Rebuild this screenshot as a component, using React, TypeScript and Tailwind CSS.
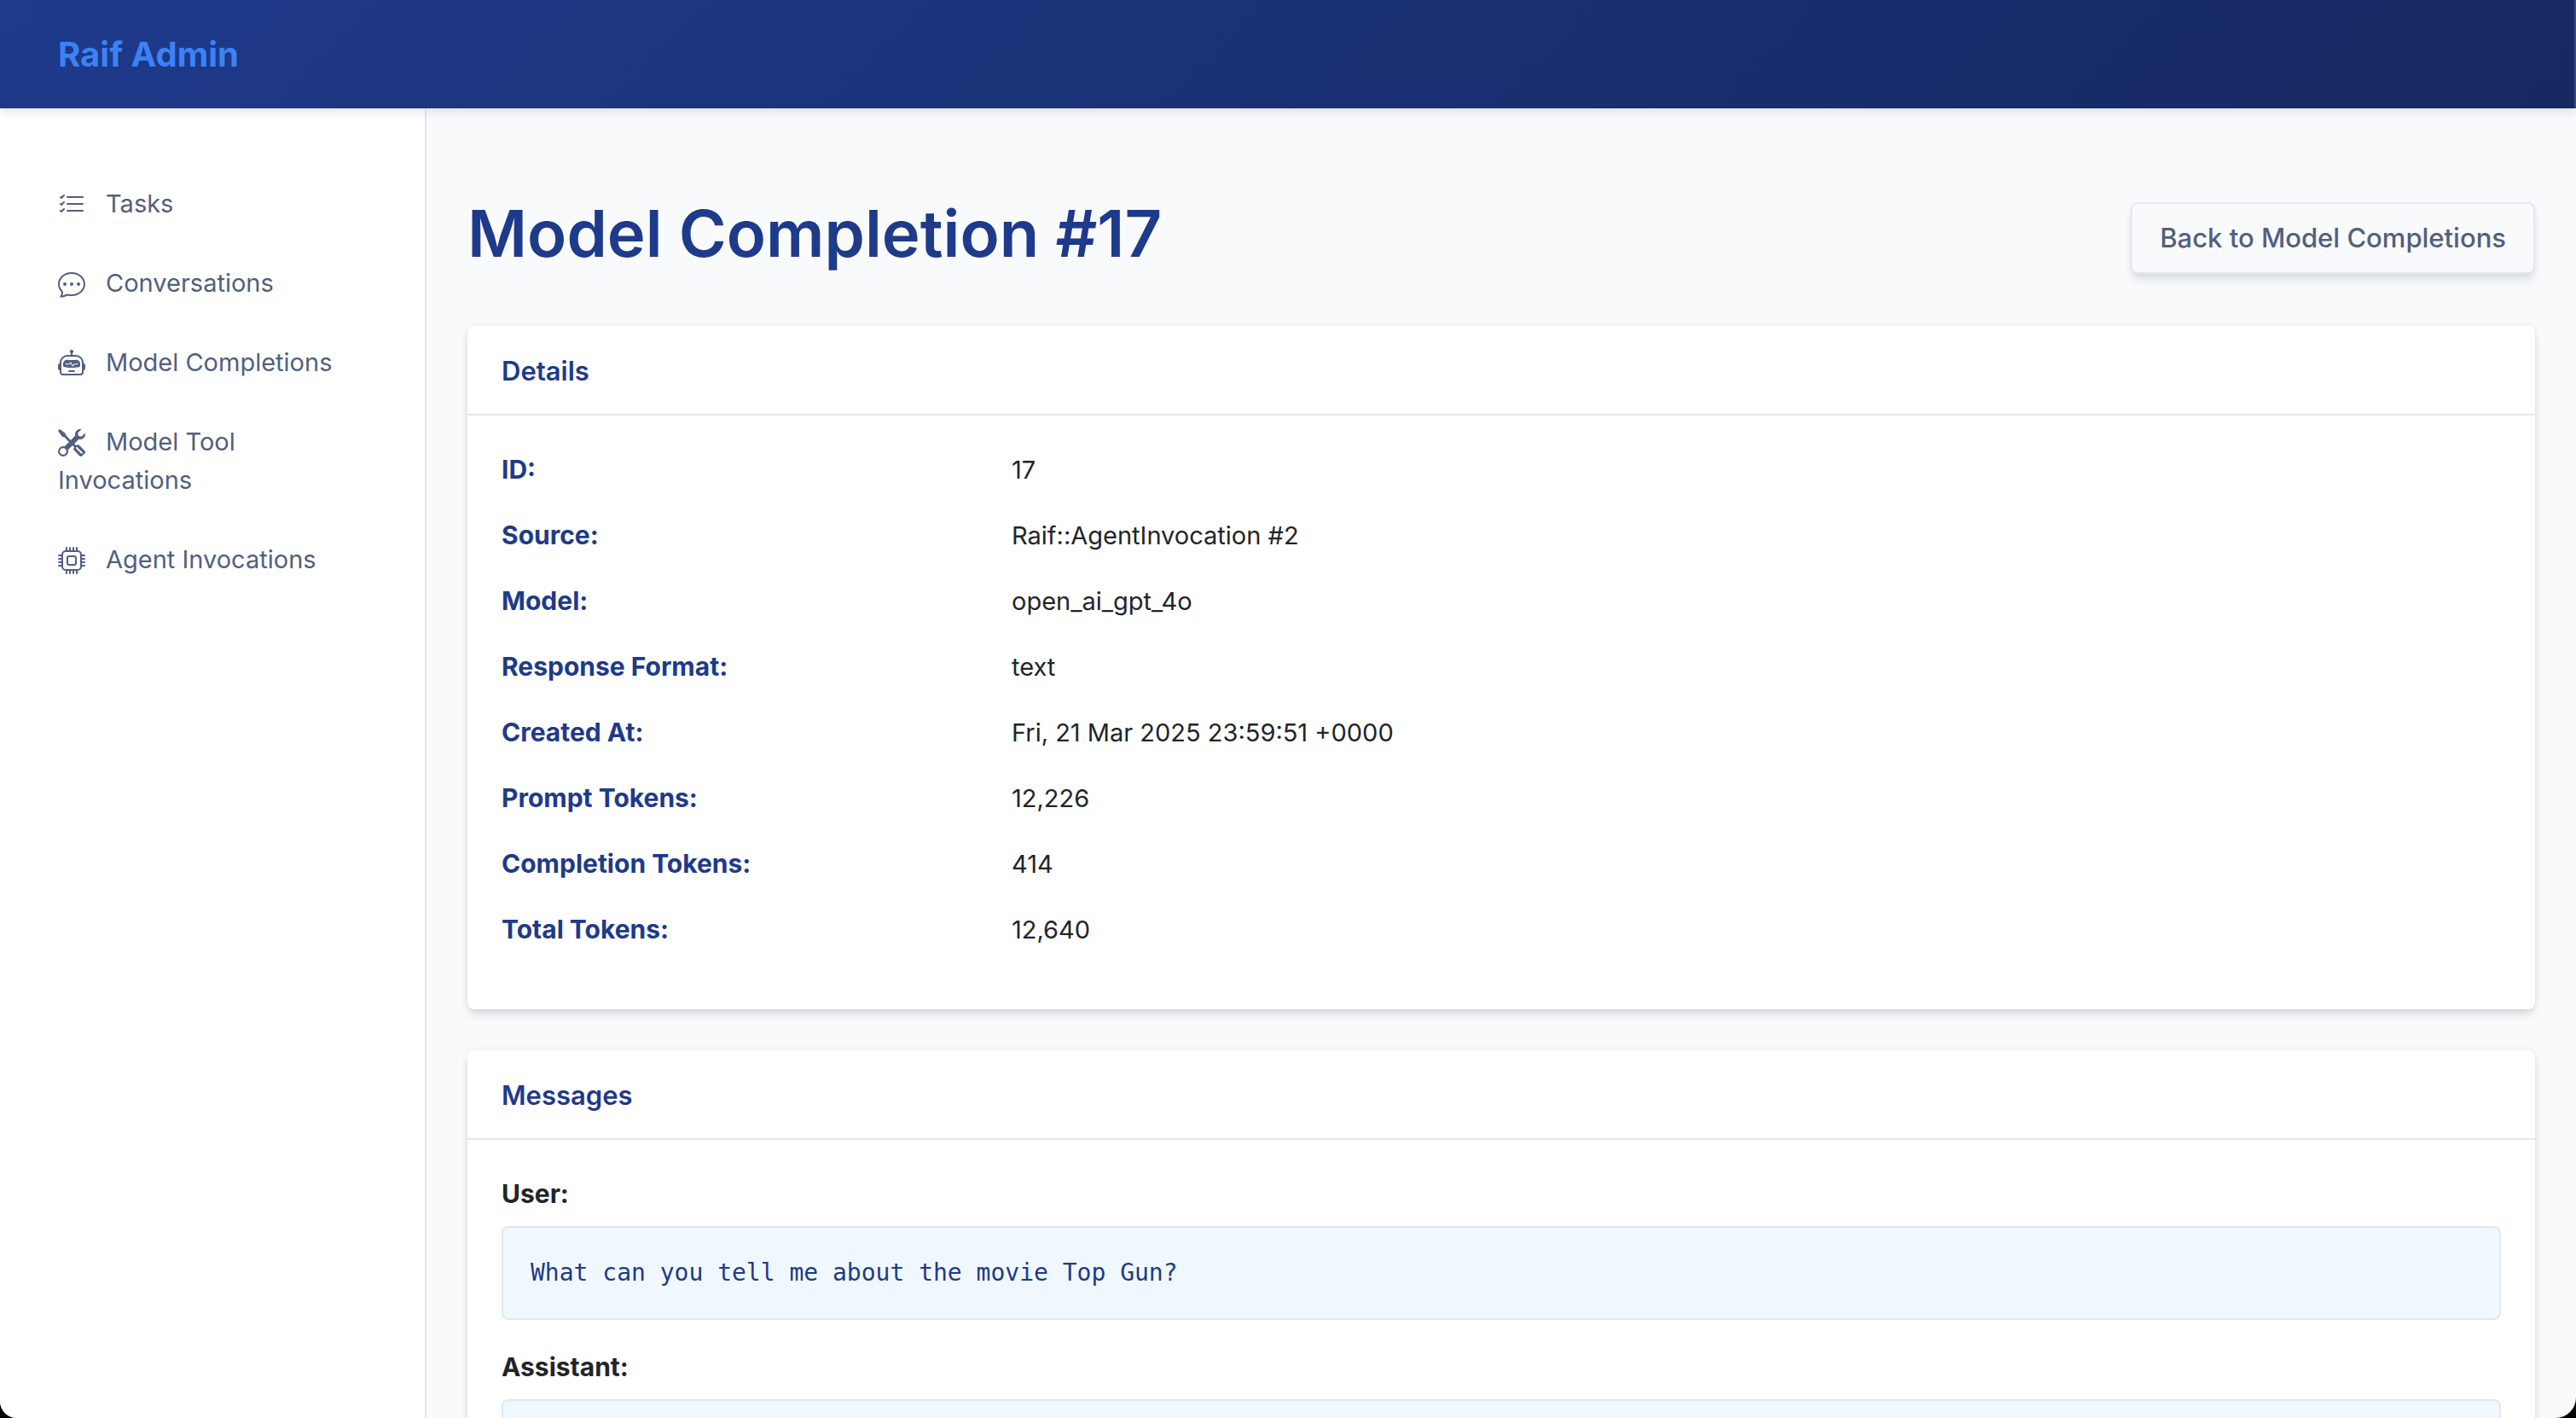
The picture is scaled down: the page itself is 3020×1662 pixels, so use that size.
import { BsChatDots, BsCpu, BsListCheck, BsRobot, BsTools } from "react-icons/bs";
import type { IconType } from "react-icons";
import type { ReactNode } from "react";

const navItems: { label: string; icon: IconType }[] = [
  { label: "Tasks", icon: BsListCheck },
  { label: "Conversations", icon: BsChatDots },
  { label: "Model Completions", icon: BsRobot },
  { label: "Model Tool Invocations", icon: BsTools },
  { label: "Agent Invocations", icon: BsCpu },
];

const details = [
  ["ID:", "17"],
  ["Source:", "Raif::AgentInvocation #2"],
  ["Model:", "open_ai_gpt_4o"],
  ["Response Format:", "text"],
  ["Created At:", "Fri, 21 Mar 2025 23:59:51 +0000"],
  ["Prompt Tokens:", "12,226"],
  ["Completion Tokens:", "414"],
  ["Total Tokens:", "12,640"],
];

const messages = [
  { role: "User:", text: "What can you tell me about the movie Top Gun?" },
  { role: "Assistant:", text: "" },
];

function Card({ title, children }: { title: string; children: ReactNode }) {
  return (
    <section className="mb-12 rounded-lg bg-white shadow-[0_8px_12px_-2px_rgba(0,0,0,0.1),0_4px_8px_-2px_rgba(0,0,0,0.06),0_0_8px_rgba(30,41,90,0.06)]">
      <h2 className="border-b-2 border-slate-200 px-10 pt-[29px] pb-[26px] text-[31px] leading-12 font-semibold text-[#1e3a8a]">
        {title}
      </h2>
      <div className="px-10 pt-[41px] pb-[39px]">{children}</div>
    </section>
  );
}

export default function App() {
  return (
    <div className="h-screen bg-black font-['Inter',sans-serif] text-[30px] leading-[45px] text-[#212529]">
      <div className="flex h-full flex-col overflow-hidden rounded-br-[24px] rounded-bl-[20px] bg-[#f9fafc]">
        <header className="z-10 flex shrink-0 items-center border-r-2 border-[#394a7a] bg-linear-135 from-[#1e3a8a] to-[#162860] px-[68px] py-[34px] shadow-[0_4px_12px_rgba(30,41,90,0.12)]">
          <a href="#" className="text-[40px] leading-[59px] font-bold text-[#3b82f6]">
            Raif Admin
          </a>
        </header>
        <div className="flex min-h-0 grow">
          <nav className="w-[500px] shrink-0 border-r-2 border-slate-200 bg-white px-5 pt-[65px] text-[29px]">
            <ul>
              {navItems.map(({ label, icon: Icon }) => (
                <li key={label}>
                  <a href="#" className="block px-12 py-6 text-[#515f80]">
                    <Icon className="mr-6 inline-block size-8 align-[-7px]" aria-hidden="true" />
                    {label}
                  </a>
                </li>
              ))}
            </ul>
          </nav>
          <main className="min-w-0 grow overflow-y-auto px-12 pt-[98px] [scrollbar-width:none]">
            <div className="mb-[61px] flex items-end justify-between">
              <h1 className="text-[76px] leading-[96px] font-semibold text-[#1e3a8a]">
                Model Completion #17
              </h1>
              <a
                href="#"
                className="rounded-lg border-2 border-slate-200 bg-[#f9fafc] px-8 py-4 text-[31px] leading-12 font-medium text-[#515f80] shadow-[0_8px_12px_-2px_rgba(0,0,0,0.1),0_4px_8px_-2px_rgba(0,0,0,0.06)]"
              >
                Back to Model Completions
              </a>
            </div>
            <Card title="Details">
              <dl>
                {details.map(([term, value]) => (
                  <div key={term} className="mb-8 grid grid-cols-[598px_1fr]">
                    <dt className="font-bold text-[#1e3a8a]">{term}</dt>
                    <dd className="text-[29px]">{value}</dd>
                  </div>
                ))}
              </dl>
            </Card>
            <Card title="Messages">
              {messages.map(({ role, text }) => (
                <div key={role} className="mb-[33px]">
                  <h3 className="mb-[15px] font-bold">{role}</h3>
                  <pre className="min-h-[110px] rounded-lg border-2 border-slate-200 bg-[#f0f8ff] p-8 font-['DejaVu_Sans_Mono',monospace] text-[28px] leading-[42px] whitespace-pre-wrap text-[#1e3a8a]">
                    {text}
                  </pre>
                </div>
              ))}
            </Card>
          </main>
        </div>
      </div>
    </div>
  );
}
